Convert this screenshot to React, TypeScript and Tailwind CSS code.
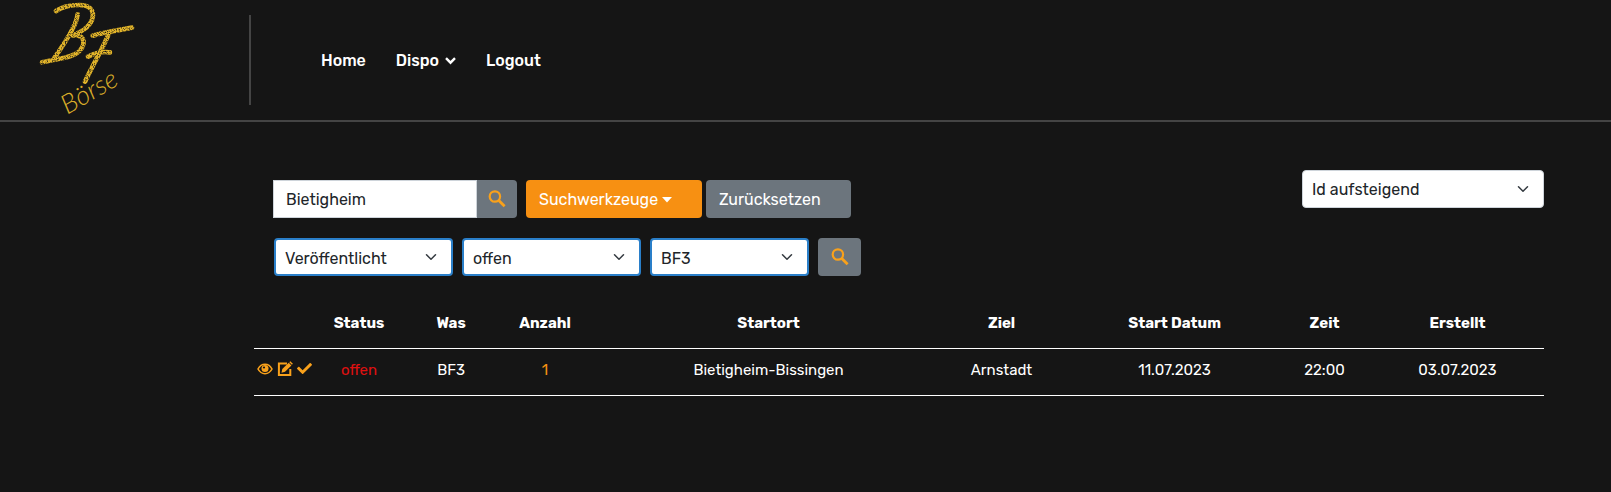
import type { ReactNode } from "react";
import { FaCheck } from "react-icons/fa";

function Logo() {
  return (
    <svg viewBox="0 0 420 360" className="h-[120px] w-[140px] overflow-visible" role="img" aria-label="BF Börse">
      <defs>
        <filter id="chalk" x="-5%" y="-5%" width="110%" height="110%">
          <feTurbulence type="fractalNoise" baseFrequency="0.26" numOctaves="2" seed="4" result="noise" />
          <feColorMatrix in="noise" type="matrix" values="0 0 0 0 0  0 0 0 0 0  0 0 0 0 0  0 0 0 -3 2.4" result="grain" />
          <feComposite in="SourceGraphic" in2="grain" operator="in" result="rough" />
          <feDisplacementMap in="rough" in2="noise" scale="5" />
        </filter>
      </defs>
      <g filter="url(#chalk)" fill="none" stroke="#e3b529" strokeLinecap="round" strokeLinejoin="round" strokeWidth="14">
        <path d="M108 33C126 20 150 15 178 15C208 15 222 30 218 52C214 74 190 93 158 106C182 102 194 116 190 134C183 158 160 168 130 174L66 187" />
        <path d="M173 43C169 73 147 110 102 176" />
        <path d="M218 107C254 96 298 90 336 83" />
        <path d="M268 98C250 142 220 192 195 245" />
        <path d="M204 170C224 159 248 154 270 157" />
      </g>
      <text
        x="142"
        y="344"
        transform="rotate(-30 142 344)"
        fill="#d9ad29"
        className="font-['Lato','Open_Sans',sans-serif] text-[80px] font-light italic"
      >
        Börse
      </text>
    </svg>
  );
}

function EyeIcon() {
  return (
    <svg viewBox="0 0 16 12" className="h-3 w-4" aria-hidden="true">
      <path d="M1 6C2.8 2.6 5.2 1.3 8 1.3S13.2 2.6 15 6C13.2 9.4 10.8 10.7 8 10.7S2.8 9.4 1 6Z" fill="none" stroke="currentColor" strokeWidth="1.6" />
      <circle cx="8" cy="5.5" r="3.5" fill="currentColor" />
      <circle cx="7" cy="4.5" r="1.1" fill="#151515" />
    </svg>
  );
}

function EditIcon() {
  return (
    <svg viewBox="0 0 16 16" className="size-4" aria-hidden="true">
      <path d="M10 2.5H1.9V14.1H13.3V8" fill="none" stroke="currentColor" strokeWidth="2" />
      <path d="M4.5 11.7L5.3 8.1L11.7 1.7L14.4 4.4L8 10.8Z" fill="currentColor" />
      <path d="M12.3 1.2L13.3 .2L15.9 2.8L14.9 3.8Z" fill="currentColor" />
    </svg>
  );
}

function SearchIcon() {
  return (
    <svg viewBox="0 0 18 18" className="size-[18px]" fill="none" stroke="currentColor" aria-hidden="true">
      <circle cx="6.9" cy="6.5" r="5.2" strokeWidth="2.2" />
      <path d="M10.8 10.4L16.6 16.2" strokeWidth="2.8" />
    </svg>
  );
}

type SelectProps = { label: string; options: string[]; className: string; pad: string };

function Select({ label, options, className, pad }: SelectProps) {
  return (
    <div className={`relative h-[38px] rounded bg-white text-[#212529] ${className}`}>
      <select aria-label={label} className={`h-full w-full appearance-none bg-transparent pr-9 pl-[9px] outline-none ${pad}`}>
        {options.map((option) => (
          <option key={option}>{option}</option>
        ))}
      </select>
      <svg viewBox="0 0 16 16" className="pointer-events-none absolute top-1/2 right-3 h-3 w-4 -translate-y-1/2" aria-hidden="true">
        <path d="M2 5l6 6 6-6" fill="none" stroke="#343a40" strokeWidth="2" strokeLinecap="round" strokeLinejoin="round" />
      </svg>
    </div>
  );
}

function SearchButton({ label, className }: { label: string; className: string }) {
  return (
    <button aria-label={label} className={`flex h-[38px] items-center justify-center bg-[#6c757d] text-[#f9a11b] ${className}`}>
      <SearchIcon />
    </button>
  );
}

function Action({ label, children }: { label: string; children: ReactNode }) {
  return (
    <button aria-label={label} className="flex">
      {children}
    </button>
  );
}

const headings = ["Status", "Was", "Anzahl", "Startort", "Ziel", "Start Datum", "Zeit", "Erstellt"];

export default function App() {
  return (
    <div className="min-h-screen bg-[#151515] font-['Rubik','Roboto',sans-serif] text-base text-white">
      <header className="flex h-[122px] items-start border-b-2 border-[#444]">
        <a href="#" className="ml-5 shrink-0">
          <Logo />
        </a>
        <div className="mt-[15px] ml-[89px] h-[90px] w-0.5 bg-[#444]" />
        <nav className="ml-[70px] flex h-[122px] items-center gap-[30px] font-medium">
          <a href="#">Home</a>
          <a href="#" className="flex items-center gap-1.5">
            Dispo
            <svg viewBox="0 0 11 8" className="h-2 w-[11px]" fill="none" stroke="currentColor" strokeWidth="2.4" aria-hidden="true">
              <path d="M1 1.2L5.5 5.7L10 1.2" />
            </svg>
          </a>
          <a href="#">Logout</a>
        </nav>
      </header>

      <main className="mr-[67px] ml-[254px] pt-12">
        <div className="flex items-start justify-between">
          <form className="mt-2.5 ml-5 flex flex-col gap-5" onSubmit={(e) => e.preventDefault()}>
            <div className="flex">
              <input
                aria-label="Suche"
                defaultValue="Bietigheim"
                className="-ml-px h-[38px] w-[204px] border border-[#ced4da] bg-white px-3 text-[#212529] outline-none"
              />
              <SearchButton label="Suchen" className="w-10 rounded-r" />
              <button className="ml-[9px] flex h-[38px] w-[176px] items-center gap-1 rounded bg-[#f79012] px-[13px] pt-0.5">
                Suchwerkzeuge
                <svg viewBox="0 0 10 6" className="h-1.5 w-2.5" fill="currentColor" aria-hidden="true">
                  <path d="M0 0H10L5 5.5Z" />
                </svg>
              </button>
              <button className="ml-1 h-[38px] w-[145px] rounded bg-[#6c757d] px-[13px] pt-0.5 text-left">Zurücksetzen</button>
            </div>
            <div className="flex gap-[9px]">
              <Select label="Sichtbarkeit" options={["Veröffentlicht"]} className="w-[179px] border-2 border-[#2a7fc9]" pad="pt-1" />
              <Select label="Status" options={["offen"]} className="w-[179px] border-2 border-[#2a7fc9]" pad="pt-1" />
              <Select label="Was" options={["BF3"]} className="w-[159px] border-2 border-[#2a7fc9]" pad="pt-1" />
              <SearchButton label="Filtern" className="w-[43px] rounded" />
            </div>
          </form>
          <Select label="Sortierung" options={["Id aufsteigend"]} className="w-[242px] border border-[#ced4da]" pad="pt-0.5" />
        </div>

        <table className="mt-6 w-full table-fixed border-collapse text-center text-[15px]">
          <colgroup>
            <col className="w-[3.64%]" />
            <col className="w-[9%]" />
            <col className="w-[5.27%]" />
            <col className="w-[9.3%]" />
            <col className="w-[25.35%]" />
            <col className="w-[10.78%]" />
            <col className="w-[16.05%]" />
            <col className="w-[7.2%]" />
            <col className="w-[13.41%]" />
          </colgroup>
          <thead>
            <tr className="h-12 border-b border-white">
              <td />
              {headings.map((heading) => (
                <th key={heading} className="pb-0.5 font-bold">
                  {heading}
                </th>
              ))}
            </tr>
          </thead>
          <tbody>
            <tr className="h-[47px] border-b border-white">
              <td className="pb-1.5">
                <div className="flex items-center gap-1 pl-[3px] text-[#f9a11b]">
                  <Action label="Ansehen">
                    <EyeIcon />
                  </Action>
                  <Action label="Bearbeiten">
                    <EditIcon />
                  </Action>
                  <Action label="Bestätigen">
                    <FaCheck className="size-[15px]" />
                  </Action>
                </div>
              </td>
              <td className="pb-0.5 text-[#e01010]">offen</td>
              <td className="pb-0.5">BF3</td>
              <td className="pb-0.5 text-[#f79012]">1</td>
              <td className="pb-0.5">Bietigheim-Bissingen</td>
              <td className="pb-0.5">Arnstadt</td>
              <td className="pb-0.5">11.07.2023</td>
              <td className="pb-0.5">22:00</td>
              <td className="pb-0.5">03.07.2023</td>
            </tr>
          </tbody>
        </table>
      </main>
    </div>
  );
}
